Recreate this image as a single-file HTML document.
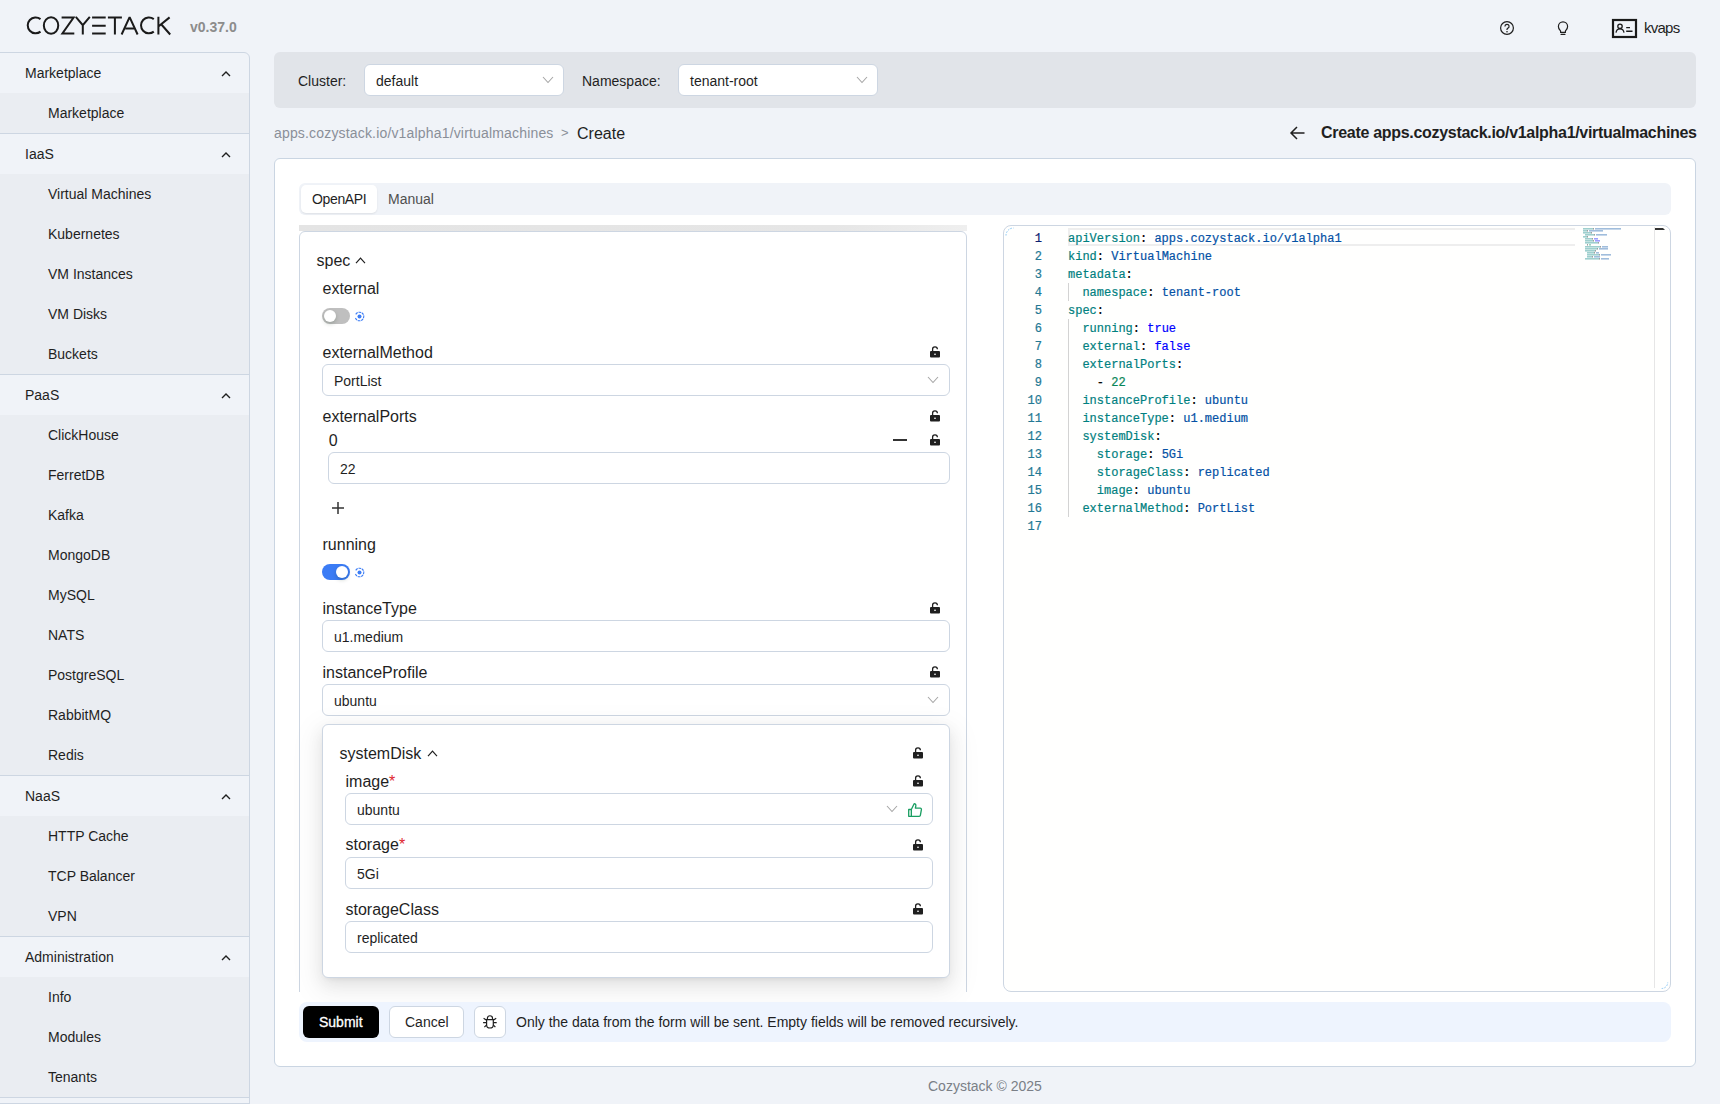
<!DOCTYPE html>
<html><head><meta charset="utf-8">
<style>
*{box-sizing:border-box;margin:0;padding:0}
html,body{width:1720px;height:1104px;overflow:hidden;background:#f0f3f8;font-family:"Liberation Sans",sans-serif;color:#1f1f1f;position:relative}
.abs{position:absolute}
.t{position:absolute;white-space:nowrap;line-height:1}
/* sidebar */
#side{position:absolute;left:-1px;top:52px;width:251px;height:1060px;border:1px solid #cdd6e2;border-radius:0 6px 0 0;background:#f0f3f8;overflow:hidden}
.gh{position:relative;height:40px;font-size:14px;color:#1f1f1f}
.gh span{position:absolute;left:25px;top:12px;line-height:16px}
.gh svg{position:absolute;left:221px;top:16.5px}
.gi{height:40px;position:relative;background:#eaedf2;font-size:14px}
.gi span{position:absolute;left:48px;top:12px;line-height:16px}
.gsep{height:1px;background:#cdd6e2}

.sel{position:absolute;background:#fff;border:1px solid #cdd6e2;border-radius:6px;font-size:14px}
.sel span{position:absolute;left:11px;top:8px;line-height:16px}
.chev{position:absolute}
.lbl{position:absolute;font-size:16px;line-height:18px;white-space:nowrap}
.inp{position:absolute;background:#fff;border:1px solid #cdd6e2;border-radius:6px;font-size:14px}
.inp span{position:absolute;left:11px;top:8px;line-height:16px}
.lock{position:absolute}
.mono{font-family:"Liberation Mono",monospace;-webkit-text-stroke:0.2px}
</style></head><body>

<!-- header -->
<svg class="abs" style="left:0;top:0" width="200" height="50" viewBox="0 0 200 50" fill="none" stroke="#1a1a1a" stroke-width="2">
<path d="M40.5 19.1A7.9 7.95 0 1 0 40.5 31.6"/>
<ellipse cx="51.05" cy="25.55" rx="7.2" ry="8.3"/>
<path d="M61.6 17.5H73.6L62.4 33.4H74.3"/>
<path d="M75.8 16.8L82.8 25.2L89.8 16.8M82.8 25.2V34.5"/>
<path d="M92.1 17.5H105.7M92.1 25.7H105.7M92.1 33.4H105.7"/>
<path d="M107.9 17.5H121.9M114.9 17.5V34.5"/>
<path d="M121.6 34.5L129.6 17.1L137.6 34.5" stroke-linejoin="bevel"/><path d="M125.2 28.5H134"/>
<path d="M153.8 19.1A7.9 7.95 0 1 0 153.8 31.6"/>
<path d="M158.4 16.8V34.5M169.6 17.4L158.7 26.2M161 24L170.2 34.5"/>
</svg>
<div class="t" style="left:190px;top:20px;font-size:14px;font-weight:bold;color:#8c8c8c">v0.37.0</div>

<!-- header right -->
<svg class="abs" style="left:1499px;top:20px" width="16" height="16" viewBox="0 0 16 16"><circle cx="8" cy="8" r="6.4" fill="none" stroke="#1f1f1f" stroke-width="1.2"/><path d="M5.9 6.4A2.1 2.1 0 1 1 8.6 8.4C8.1 8.6 8 9 8 9.6V10" fill="none" stroke="#1f1f1f" stroke-width="1.2"/><circle cx="8" cy="11.8" r="0.8" fill="#1f1f1f"/></svg>
<svg class="abs" style="left:1556px;top:20px" width="14" height="16" viewBox="0 0 14 16"><path d="M4.6 12.4V11.2C4.6 10.3 2.4 9.2 2.4 6.4A4.6 4.6 0 0 1 11.6 6.4C11.6 9.2 9.4 10.3 9.4 11.2V12.4Z" fill="none" stroke="#1f1f1f" stroke-width="1.2" stroke-linejoin="round"/><path d="M5.1 14.4H8.9" stroke="#1f1f1f" stroke-width="1.2" stroke-linecap="round"/></svg>
<svg class="abs" style="left:1611px;top:18px" width="27" height="21" viewBox="0 0 27 21"><rect x="2" y="2" width="23" height="17" fill="none" stroke="#1a1a1a" stroke-width="2.2"/><circle cx="9" cy="8.3" r="2.2" fill="none" stroke="#1a1a1a" stroke-width="1.3"/><path d="M5 14.6C5.4 12 7 10.8 9 10.8S12.6 12 13 14.6" fill="none" stroke="#1a1a1a" stroke-width="1.3"/><path d="M15.2 9.6H19M15.2 13.2H21.5" stroke="#1a1a1a" stroke-width="1.4"/></svg>
<div class="t" style="left:1644px;top:20px;font-size:15px;line-height:16px;letter-spacing:-0.75px">kvaps</div>

<!-- filter bar -->
<div class="abs" style="left:274px;top:52px;width:1422px;height:56px;background:#e1e4e9;border-radius:6px"></div>
<div class="t" style="left:298px;top:73px;font-size:14px;line-height:16px">Cluster:</div>
<div class="sel" style="left:364px;top:64px;width:200px;height:32px"><span>default</span><svg class="chev" style="left:177px;top:11px" width="12" height="8" viewBox="0 0 12 8"><path d="M1 1L6 6.5L11 1" fill="none" stroke="#a6a6a6" stroke-width="1.1"/></svg></div>
<div class="t" style="left:582px;top:73px;font-size:14px;line-height:16px">Namespace:</div>
<div class="sel" style="left:678px;top:64px;width:200px;height:32px"><span>tenant-root</span><svg class="chev" style="left:177px;top:11px" width="12" height="8" viewBox="0 0 12 8"><path d="M1 1L6 6.5L11 1" fill="none" stroke="#a6a6a6" stroke-width="1.1"/></svg></div>

<!-- breadcrumb -->
<div class="t" style="left:274px;top:125px;font-size:14px;line-height:16px;color:#8a8f98;letter-spacing:0.17px">apps.cozystack.io/v1alpha1/virtualmachines</div>
<div class="t" style="left:561px;top:125px;font-size:13px;line-height:16px;color:#8a8f98">&gt;</div>
<div class="t" style="left:577px;top:124.5px;font-size:16px;line-height:18px;color:#1f1f1f">Create</div>
<svg class="abs" style="left:1289px;top:125px" width="17" height="16" viewBox="0 0 17 16"><path d="M15.5 8H2M8 2L2 8L8 14" fill="none" stroke="#1f1f1f" stroke-width="1.5"/></svg>
<div class="t" style="left:1321px;top:124px;font-size:16px;line-height:18px;font-weight:bold;color:#1f1f1f;letter-spacing:-0.3px">Create apps.cozystack.io/v1alpha1/virtualmachines</div>

<!-- main card -->
<div class="abs" style="left:274px;top:158px;width:1422px;height:909px;background:#fff;border:1px solid #cad5e2;border-radius:6px"></div>
<div class="abs" style="left:299px;top:183px;width:1372px;height:32px;background:#f0f3f8;border-radius:6px"></div>
<div class="abs" style="left:301px;top:185px;width:76px;height:28px;background:#fff;border-radius:5px;box-shadow:0 1px 2px rgba(0,0,0,.08)"></div>
<div class="t" style="left:312px;top:191px;font-size:14px;line-height:16px;letter-spacing:-0.35px">OpenAPI</div>
<div class="t" style="left:388px;top:191px;font-size:14px;line-height:16px;color:#4f4f4f">Manual</div>

<!-- form panel -->
<div class="abs" style="left:299px;top:225px;width:668px;height:767px;overflow:hidden;background:#fff">
 <div class="abs" style="left:0;top:0;width:668px;height:6px;background:linear-gradient(90deg,#e4e4e4 0%,#e6e6e6 80%,#efefef 100%)"></div>
 <div class="abs" style="left:0;top:6px;width:668px;height:900px;border:1px solid #cdd6e2;border-radius:6px;background:#fff"></div>
</div>
<div class="t" style="left:316.5px;top:252.3px;font-size:16px;line-height:18px">spec</div>
<svg class="abs" style="left:354.5px;top:256.5px" width="11" height="7" viewBox="0 0 11 7"><path d="M1 6.2L5.5 1.2L10 6.2" fill="none" stroke="#1f1f1f" stroke-width="1.2"/></svg>
<div class="t" style="left:322.5px;top:279.9px;font-size:16px;line-height:18px">external</div>
<div class="abs" style="left:322px;top:308px;width:28px;height:16px;border-radius:8px;background:#bfbfbf"></div>
<div class="abs" style="left:324px;top:310px;width:12px;height:12px;border-radius:6px;background:#fff;box-shadow:0 2px 4px rgba(0,35,11,.2)"></div>
<svg class="abs" style="left:353.5px;top:310.5px" width="11" height="11" viewBox="0 0 11 11"><path d="M1.46 6.97A4.3 4.3 0 1 0 1.46 4.03" fill="none" stroke="#3b7cf5" stroke-width="1.1" stroke-dasharray="2.6 0.7"/><circle cx="5.5" cy="5.5" r="2" fill="#3b7cf5"/></svg>
<div class="t" style="left:322.5px;top:344.0px;font-size:16px;line-height:18px">externalMethod</div>
<svg class="lock" style="left:930px;top:346px" width="10" height="12" viewBox="0 0 10 12"><path d="M2.6 5.2V3.4A2.4 2.4 0 0 1 7.4 3.2" fill="none" stroke="#1f1f1f" stroke-width="1.3"/><rect x="0" y="5" width="10" height="6.6" rx="1" fill="#1f1f1f"/><rect x="4.3" y="7.6" width="1.4" height="1.4" fill="#fff"/></svg>
<div class="inp" style="left:322px;top:364px;width:628px;height:32px"><span>PortList</span><svg class="chev" style="left:604px;top:11px" width="12" height="8" viewBox="0 0 12 8"><path d="M1 1L6 6.5L11 1" fill="none" stroke="#a6a6a6" stroke-width="1.1"/></svg></div>
<div class="t" style="left:322.5px;top:408.0px;font-size:16px;line-height:18px">externalPorts</div>
<svg class="lock" style="left:930px;top:410px" width="10" height="12" viewBox="0 0 10 12"><path d="M2.6 5.2V3.4A2.4 2.4 0 0 1 7.4 3.2" fill="none" stroke="#1f1f1f" stroke-width="1.3"/><rect x="0" y="5" width="10" height="6.6" rx="1" fill="#1f1f1f"/><rect x="4.3" y="7.6" width="1.4" height="1.4" fill="#fff"/></svg>
<div class="t" style="left:328.8px;top:432.1px;font-size:16px;line-height:18px">0</div>
<div class="abs" style="left:893px;top:439px;width:14px;height:2px;background:#333"></div>
<svg class="lock" style="left:930px;top:434px" width="10" height="12" viewBox="0 0 10 12"><path d="M2.6 5.2V3.4A2.4 2.4 0 0 1 7.4 3.2" fill="none" stroke="#1f1f1f" stroke-width="1.3"/><rect x="0" y="5" width="10" height="6.6" rx="1" fill="#1f1f1f"/><rect x="4.3" y="7.6" width="1.4" height="1.4" fill="#fff"/></svg>
<div class="inp" style="left:328px;top:452px;width:622px;height:32px"><span>22</span></div>
<svg class="abs" style="left:331px;top:501px" width="14" height="14" viewBox="0 0 14 14"><path d="M7 1V13M1 7H13" stroke="#333" stroke-width="1.5"/></svg>
<div class="t" style="left:322.5px;top:535.8px;font-size:16px;line-height:18px">running</div>
<div class="abs" style="left:322px;top:564px;width:28px;height:16px;border-radius:8px;background:#3b7cf5"></div>
<div class="abs" style="left:336px;top:566px;width:12px;height:12px;border-radius:6px;background:#fff;box-shadow:0 2px 4px rgba(0,35,11,.2)"></div>
<svg class="abs" style="left:353.5px;top:566.5px" width="11" height="11" viewBox="0 0 11 11"><path d="M1.46 6.97A4.3 4.3 0 1 0 1.46 4.03" fill="none" stroke="#3b7cf5" stroke-width="1.1" stroke-dasharray="2.6 0.7"/><circle cx="5.5" cy="5.5" r="2" fill="#3b7cf5"/></svg>
<div class="t" style="left:322.5px;top:600.0px;font-size:16px;line-height:18px">instanceType</div>
<svg class="lock" style="left:930px;top:602px" width="10" height="12" viewBox="0 0 10 12"><path d="M2.6 5.2V3.4A2.4 2.4 0 0 1 7.4 3.2" fill="none" stroke="#1f1f1f" stroke-width="1.3"/><rect x="0" y="5" width="10" height="6.6" rx="1" fill="#1f1f1f"/><rect x="4.3" y="7.6" width="1.4" height="1.4" fill="#fff"/></svg>
<div class="inp" style="left:322px;top:620px;width:628px;height:32px"><span>u1.medium</span></div>
<div class="t" style="left:322.5px;top:664.0px;font-size:16px;line-height:18px">instanceProfile</div>
<svg class="lock" style="left:930px;top:666px" width="10" height="12" viewBox="0 0 10 12"><path d="M2.6 5.2V3.4A2.4 2.4 0 0 1 7.4 3.2" fill="none" stroke="#1f1f1f" stroke-width="1.3"/><rect x="0" y="5" width="10" height="6.6" rx="1" fill="#1f1f1f"/><rect x="4.3" y="7.6" width="1.4" height="1.4" fill="#fff"/></svg>
<div class="inp" style="left:322px;top:684px;width:628px;height:32px"><span>ubuntu</span><svg class="chev" style="left:604px;top:11px" width="12" height="8" viewBox="0 0 12 8"><path d="M1 1L6 6.5L11 1" fill="none" stroke="#a6a6a6" stroke-width="1.1"/></svg></div>

<div class="abs" style="left:322px;top:724px;width:628px;height:254px;border:1px solid #cdd6e2;border-radius:6px;background:#fff;box-shadow:0 6px 16px 0 rgba(0,0,0,.08),0 3px 6px -4px rgba(0,0,0,.12),0 9px 28px 8px rgba(0,0,0,.05)"></div>
<div class="t" style="left:339.5px;top:744.8px;font-size:16px;line-height:18px">systemDisk</div>
<svg class="abs" style="left:426.5px;top:750px" width="11" height="7" viewBox="0 0 11 7"><path d="M1 6.2L5.5 1.2L10 6.2" fill="none" stroke="#1f1f1f" stroke-width="1.2"/></svg>
<svg class="lock" style="left:913px;top:747px" width="10" height="12" viewBox="0 0 10 12"><path d="M2.6 5.2V3.4A2.4 2.4 0 0 1 7.4 3.2" fill="none" stroke="#1f1f1f" stroke-width="1.3"/><rect x="0" y="5" width="10" height="6.6" rx="1" fill="#1f1f1f"/><rect x="4.3" y="7.6" width="1.4" height="1.4" fill="#fff"/></svg>
<div class="t" style="left:345.5px;top:772.7px;font-size:16px;line-height:18px">image<span style="color:#e0282e">*</span></div>
<svg class="lock" style="left:913px;top:775px" width="10" height="12" viewBox="0 0 10 12"><path d="M2.6 5.2V3.4A2.4 2.4 0 0 1 7.4 3.2" fill="none" stroke="#1f1f1f" stroke-width="1.3"/><rect x="0" y="5" width="10" height="6.6" rx="1" fill="#1f1f1f"/><rect x="4.3" y="7.6" width="1.4" height="1.4" fill="#fff"/></svg>
<div class="inp" style="left:345px;top:793px;width:588px;height:32px"><span>ubuntu</span><svg class="chev" style="left:540px;top:11px" width="12" height="8" viewBox="0 0 12 8"><path d="M1 1L6 6.5L11 1" fill="none" stroke="#a6a6a6" stroke-width="1.1"/></svg><svg class="abs" style="left:560.5px;top:7.5px" width="16" height="16" viewBox="0 0 17 17"><path d="M1.8 8H4.6V15.2H1.8Z M4.6 8L7.6 1.8C8.8 1.8 9.6 2.6 9.4 4L8.9 6.6H14.1C14.9 6.6 15.5 7.3 15.3 8.1L14.2 14.2C14.1 14.8 13.6 15.2 13 15.2H4.6" fill="none" stroke="#1a9e62" stroke-width="1.4" stroke-linejoin="round"/></svg></div>
<div class="t" style="left:345.5px;top:836.4px;font-size:16px;line-height:18px">storage<span style="color:#e0282e">*</span></div>
<svg class="lock" style="left:913px;top:839px" width="10" height="12" viewBox="0 0 10 12"><path d="M2.6 5.2V3.4A2.4 2.4 0 0 1 7.4 3.2" fill="none" stroke="#1f1f1f" stroke-width="1.3"/><rect x="0" y="5" width="10" height="6.6" rx="1" fill="#1f1f1f"/><rect x="4.3" y="7.6" width="1.4" height="1.4" fill="#fff"/></svg>
<div class="inp" style="left:345px;top:857px;width:588px;height:32px"><span>5Gi</span></div>
<div class="t" style="left:345.5px;top:900.6px;font-size:16px;line-height:18px">storageClass</div>
<svg class="lock" style="left:913px;top:903px" width="10" height="12" viewBox="0 0 10 12"><path d="M2.6 5.2V3.4A2.4 2.4 0 0 1 7.4 3.2" fill="none" stroke="#1f1f1f" stroke-width="1.3"/><rect x="0" y="5" width="10" height="6.6" rx="1" fill="#1f1f1f"/><rect x="4.3" y="7.6" width="1.4" height="1.4" fill="#fff"/></svg>
<div class="inp" style="left:345px;top:921px;width:588px;height:32px"><span>replicated</span></div>

<!-- editor -->
<div class="abs" style="left:1003px;top:225px;width:668px;height:767px;border:1px solid #cdd6e2;border-radius:8px;background:#fffffe;overflow:hidden"></div>
<div class="abs" style="left:1068px;top:228px;width:507px;height:18px;border:2px solid #eeeeee;border-right:0"></div>
<div class="abs mono" style="left:1000px;top:1.5px;width:42px;height:600px;font-size:12px;text-align:right"><div style="position:absolute;right:0;top:228px;height:18px;line-height:18px;color:#0b216f">1</div><div style="position:absolute;right:0;top:246px;height:18px;line-height:18px;color:#237893">2</div><div style="position:absolute;right:0;top:264px;height:18px;line-height:18px;color:#237893">3</div><div style="position:absolute;right:0;top:282px;height:18px;line-height:18px;color:#237893">4</div><div style="position:absolute;right:0;top:300px;height:18px;line-height:18px;color:#237893">5</div><div style="position:absolute;right:0;top:318px;height:18px;line-height:18px;color:#237893">6</div><div style="position:absolute;right:0;top:336px;height:18px;line-height:18px;color:#237893">7</div><div style="position:absolute;right:0;top:354px;height:18px;line-height:18px;color:#237893">8</div><div style="position:absolute;right:0;top:372px;height:18px;line-height:18px;color:#237893">9</div><div style="position:absolute;right:0;top:390px;height:18px;line-height:18px;color:#237893">10</div><div style="position:absolute;right:0;top:408px;height:18px;line-height:18px;color:#237893">11</div><div style="position:absolute;right:0;top:426px;height:18px;line-height:18px;color:#237893">12</div><div style="position:absolute;right:0;top:444px;height:18px;line-height:18px;color:#237893">13</div><div style="position:absolute;right:0;top:462px;height:18px;line-height:18px;color:#237893">14</div><div style="position:absolute;right:0;top:480px;height:18px;line-height:18px;color:#237893">15</div><div style="position:absolute;right:0;top:498px;height:18px;line-height:18px;color:#237893">16</div><div style="position:absolute;right:0;top:516px;height:18px;line-height:18px;color:#237893">17</div></div>
<div class="abs mono" style="left:1068px;top:1.5px;width:500px;height:600px;font-size:12px"><div style="position:absolute;left:0;top:228px;height:18px;line-height:18px;white-space:pre"><span style="color:#008080">apiVersion</span><span style="color:#000000">:&nbsp;</span><span style="color:#0451a5">apps.cozystack.io/v1alpha1</span></div><div style="position:absolute;left:0;top:246px;height:18px;line-height:18px;white-space:pre"><span style="color:#008080">kind</span><span style="color:#000000">:&nbsp;</span><span style="color:#0451a5">VirtualMachine</span></div><div style="position:absolute;left:0;top:264px;height:18px;line-height:18px;white-space:pre"><span style="color:#008080">metadata</span><span style="color:#000000">:</span></div><div style="position:absolute;left:0;top:282px;height:18px;line-height:18px;white-space:pre"><span style="color:#000000">&nbsp;&nbsp;</span><span style="color:#008080">namespace</span><span style="color:#000000">:&nbsp;</span><span style="color:#0451a5">tenant-root</span></div><div style="position:absolute;left:0;top:300px;height:18px;line-height:18px;white-space:pre"><span style="color:#008080">spec</span><span style="color:#000000">:</span></div><div style="position:absolute;left:0;top:318px;height:18px;line-height:18px;white-space:pre"><span style="color:#000000">&nbsp;&nbsp;</span><span style="color:#008080">running</span><span style="color:#000000">:&nbsp;</span><span style="color:#0000ff">true</span></div><div style="position:absolute;left:0;top:336px;height:18px;line-height:18px;white-space:pre"><span style="color:#000000">&nbsp;&nbsp;</span><span style="color:#008080">external</span><span style="color:#000000">:&nbsp;</span><span style="color:#0000ff">false</span></div><div style="position:absolute;left:0;top:354px;height:18px;line-height:18px;white-space:pre"><span style="color:#000000">&nbsp;&nbsp;</span><span style="color:#008080">externalPorts</span><span style="color:#000000">:</span></div><div style="position:absolute;left:0;top:372px;height:18px;line-height:18px;white-space:pre"><span style="color:#000000">&nbsp;&nbsp;&nbsp;&nbsp;</span><span style="color:#000000">-&nbsp;</span><span style="color:#098658">22</span></div><div style="position:absolute;left:0;top:390px;height:18px;line-height:18px;white-space:pre"><span style="color:#000000">&nbsp;&nbsp;</span><span style="color:#008080">instanceProfile</span><span style="color:#000000">:&nbsp;</span><span style="color:#0451a5">ubuntu</span></div><div style="position:absolute;left:0;top:408px;height:18px;line-height:18px;white-space:pre"><span style="color:#000000">&nbsp;&nbsp;</span><span style="color:#008080">instanceType</span><span style="color:#000000">:&nbsp;</span><span style="color:#0451a5">u1.medium</span></div><div style="position:absolute;left:0;top:426px;height:18px;line-height:18px;white-space:pre"><span style="color:#000000">&nbsp;&nbsp;</span><span style="color:#008080">systemDisk</span><span style="color:#000000">:</span></div><div style="position:absolute;left:0;top:444px;height:18px;line-height:18px;white-space:pre"><span style="color:#000000">&nbsp;&nbsp;&nbsp;&nbsp;</span><span style="color:#008080">storage</span><span style="color:#000000">:&nbsp;</span><span style="color:#0451a5">5Gi</span></div><div style="position:absolute;left:0;top:462px;height:18px;line-height:18px;white-space:pre"><span style="color:#000000">&nbsp;&nbsp;&nbsp;&nbsp;</span><span style="color:#008080">storageClass</span><span style="color:#000000">:&nbsp;</span><span style="color:#0451a5">replicated</span></div><div style="position:absolute;left:0;top:480px;height:18px;line-height:18px;white-space:pre"><span style="color:#000000">&nbsp;&nbsp;&nbsp;&nbsp;</span><span style="color:#008080">image</span><span style="color:#000000">:&nbsp;</span><span style="color:#0451a5">ubuntu</span></div><div style="position:absolute;left:0;top:498px;height:18px;line-height:18px;white-space:pre"><span style="color:#000000">&nbsp;&nbsp;</span><span style="color:#008080">externalMethod</span><span style="color:#000000">:&nbsp;</span><span style="color:#0451a5">PortList</span></div><div style="position:absolute;left:0;top:516px;height:18px;line-height:18px;white-space:pre"></div></div>
<div class="abs" style="left:1068px;top:283px;width:1px;height:18px;background:#d3d3d3"></div>
<div class="abs" style="left:1068px;top:319px;width:1px;height:198px;background:#d3d3d3"></div>
<svg class="abs" style="left:1583px;top:228px" width="40" height="40" viewBox="0 0 40 40"><rect x="0" y="0" width="10" height="1.6" fill="#008080" opacity="0.38"/><rect x="10" y="0" width="1" height="1.6" fill="#000000" opacity="0.38"/><rect x="12" y="0" width="26" height="1.6" fill="#0451a5" opacity="0.38"/><rect x="0" y="2" width="4" height="1.6" fill="#008080" opacity="0.38"/><rect x="4" y="2" width="1" height="1.6" fill="#000000" opacity="0.38"/><rect x="6" y="2" width="14" height="1.6" fill="#0451a5" opacity="0.38"/><rect x="0" y="4" width="8" height="1.6" fill="#008080" opacity="0.38"/><rect x="8" y="4" width="1" height="1.6" fill="#000000" opacity="0.38"/><rect x="2" y="6" width="9" height="1.6" fill="#008080" opacity="0.38"/><rect x="11" y="6" width="1" height="1.6" fill="#000000" opacity="0.38"/><rect x="13" y="6" width="11" height="1.6" fill="#0451a5" opacity="0.38"/><rect x="0" y="8" width="4" height="1.6" fill="#008080" opacity="0.38"/><rect x="4" y="8" width="1" height="1.6" fill="#000000" opacity="0.38"/><rect x="2" y="10" width="7" height="1.6" fill="#008080" opacity="0.38"/><rect x="9" y="10" width="1" height="1.6" fill="#000000" opacity="0.38"/><rect x="11" y="10" width="4" height="1.6" fill="#0000ff" opacity="0.38"/><rect x="2" y="12" width="8" height="1.6" fill="#008080" opacity="0.38"/><rect x="10" y="12" width="1" height="1.6" fill="#000000" opacity="0.38"/><rect x="12" y="12" width="5" height="1.6" fill="#0000ff" opacity="0.38"/><rect x="2" y="14" width="13" height="1.6" fill="#008080" opacity="0.38"/><rect x="15" y="14" width="1" height="1.6" fill="#000000" opacity="0.38"/><rect x="4" y="16" width="1" height="1.6" fill="#000000" opacity="0.38"/><rect x="6" y="16" width="2" height="1.6" fill="#098658" opacity="0.38"/><rect x="2" y="18" width="15" height="1.6" fill="#008080" opacity="0.38"/><rect x="17" y="18" width="1" height="1.6" fill="#000000" opacity="0.38"/><rect x="19" y="18" width="6" height="1.6" fill="#0451a5" opacity="0.38"/><rect x="2" y="20" width="12" height="1.6" fill="#008080" opacity="0.38"/><rect x="14" y="20" width="1" height="1.6" fill="#000000" opacity="0.38"/><rect x="16" y="20" width="9" height="1.6" fill="#0451a5" opacity="0.38"/><rect x="2" y="22" width="10" height="1.6" fill="#008080" opacity="0.38"/><rect x="12" y="22" width="1" height="1.6" fill="#000000" opacity="0.38"/><rect x="4" y="24" width="7" height="1.6" fill="#008080" opacity="0.38"/><rect x="11" y="24" width="1" height="1.6" fill="#000000" opacity="0.38"/><rect x="13" y="24" width="3" height="1.6" fill="#0451a5" opacity="0.38"/><rect x="4" y="26" width="12" height="1.6" fill="#008080" opacity="0.38"/><rect x="16" y="26" width="1" height="1.6" fill="#000000" opacity="0.38"/><rect x="18" y="26" width="10" height="1.6" fill="#0451a5" opacity="0.38"/><rect x="4" y="28" width="5" height="1.6" fill="#008080" opacity="0.38"/><rect x="9" y="28" width="1" height="1.6" fill="#000000" opacity="0.38"/><rect x="11" y="28" width="6" height="1.6" fill="#0451a5" opacity="0.38"/><rect x="2" y="30" width="14" height="1.6" fill="#008080" opacity="0.38"/><rect x="16" y="30" width="1" height="1.6" fill="#000000" opacity="0.38"/><rect x="18" y="30" width="8" height="1.6" fill="#0451a5" opacity="0.38"/></svg>
<svg class="abs" style="left:1003px;top:225px" width="20" height="20" viewBox="0 0 20 20"><path d="M3 10.5A7.5 7.5 0 0 1 10.5 3" fill="none" stroke="#7cc0f2" stroke-width="0.9" stroke-dasharray="1.6 1.2"/></svg>
<svg class="abs" style="left:1650px;top:971px" width="20" height="20" viewBox="0 0 20 20"><path d="M11.7 17.5A6 6 0 0 0 17.7 11.5" fill="none" stroke="#7cc0f2" stroke-width="0.9" stroke-dasharray="1.6 1.2"/></svg>
<div class="abs" style="left:1654px;top:227px;width:1px;height:761px;background:#e6e6e6"></div>
<div class="abs" style="left:1655px;top:228px;width:10px;height:2px;background:#333;clip-path:polygon(0 0,80% 0,100% 100%,0 100%)"></div>

<!-- footer bar -->
<div class="abs" style="left:299px;top:1002px;width:1372px;height:40px;background:#eef4fe;border-radius:8px"></div>
<div class="abs" style="left:303px;top:1006px;width:76px;height:32px;background:#000;border-radius:6px"></div>
<div class="t" style="left:319px;top:1014px;font-size:14px;line-height:16px;color:#fff;-webkit-text-stroke:0.3px #fff">Submit</div>
<div class="abs" style="left:389px;top:1006px;width:75px;height:32px;background:#fff;border:1px solid #cdd6e2;border-radius:6px"></div>
<div class="t" style="left:405px;top:1014px;font-size:14px;line-height:16px">Cancel</div>
<div class="abs" style="left:474px;top:1006px;width:32px;height:32px;background:#fff;border:1px solid #cdd6e2;border-radius:6px"></div>
<svg class="abs" style="left:482px;top:1014px" width="16" height="16" viewBox="0 0 16 16" fill="none" stroke="#1f1f1f" stroke-width="1.2"><path d="M5.4 5.7V4.3A2.55 2.55 0 0 1 10.5 4.3V5.7"/><path d="M4.6 5.7V10.9A3.35 3.1 0 0 0 11.3 10.9V5.7"/><path d="M3.4 5.7H12.5M1.6 4.2L4.2 6M14.2 4.2L11.6 6M1.1 8.6H4.6M14.7 8.6H11.2M2.4 13.1L4.6 10.9M13.4 13.1L11.2 10.9"/></svg>
<div class="t" style="left:516px;top:1014px;font-size:14px;line-height:16px">Only the data from the form will be sent. Empty fields will be removed recursively.</div>
<div class="t" style="left:928px;top:1078px;font-size:14px;line-height:16px;color:#7a7f87">Cozystack © 2025</div>

<div id="side">
 <div class="gh"><span>Marketplace</span><svg width="10" height="7" viewBox="0 0 10 7"><path d="M1 6L5 2L9 6" fill="none" stroke="#1f1f1f" stroke-width="1.4"/></svg></div>
 <div class="gi"><span>Marketplace</span></div>
 <div class="gsep"></div>
 <div class="gh"><span>IaaS</span><svg width="10" height="7" viewBox="0 0 10 7"><path d="M1 6L5 2L9 6" fill="none" stroke="#1f1f1f" stroke-width="1.4"/></svg></div>
 <div class="gi"><span>Virtual Machines</span></div>
 <div class="gi"><span>Kubernetes</span></div>
 <div class="gi"><span>VM Instances</span></div>
 <div class="gi"><span>VM Disks</span></div>
 <div class="gi"><span>Buckets</span></div>
 <div class="gsep"></div>
 <div class="gh"><span>PaaS</span><svg width="10" height="7" viewBox="0 0 10 7"><path d="M1 6L5 2L9 6" fill="none" stroke="#1f1f1f" stroke-width="1.4"/></svg></div>
 <div class="gi"><span>ClickHouse</span></div>
 <div class="gi"><span>FerretDB</span></div>
 <div class="gi"><span>Kafka</span></div>
 <div class="gi"><span>MongoDB</span></div>
 <div class="gi"><span>MySQL</span></div>
 <div class="gi"><span>NATS</span></div>
 <div class="gi"><span>PostgreSQL</span></div>
 <div class="gi"><span>RabbitMQ</span></div>
 <div class="gi"><span>Redis</span></div>
 <div class="gsep"></div>
 <div class="gh"><span>NaaS</span><svg width="10" height="7" viewBox="0 0 10 7"><path d="M1 6L5 2L9 6" fill="none" stroke="#1f1f1f" stroke-width="1.4"/></svg></div>
 <div class="gi"><span>HTTP Cache</span></div>
 <div class="gi"><span>TCP Balancer</span></div>
 <div class="gi"><span>VPN</span></div>
 <div class="gsep"></div>
 <div class="gh"><span>Administration</span><svg width="10" height="7" viewBox="0 0 10 7"><path d="M1 6L5 2L9 6" fill="none" stroke="#1f1f1f" stroke-width="1.4"/></svg></div>
 <div class="gi"><span>Info</span></div>
 <div class="gi"><span>Modules</span></div>
 <div class="gi"><span>Tenants</span></div>
 <div class="gsep"></div>
 <div style="height:5px"></div>
 <div class="gsep"></div>
</div>

</body></html>
